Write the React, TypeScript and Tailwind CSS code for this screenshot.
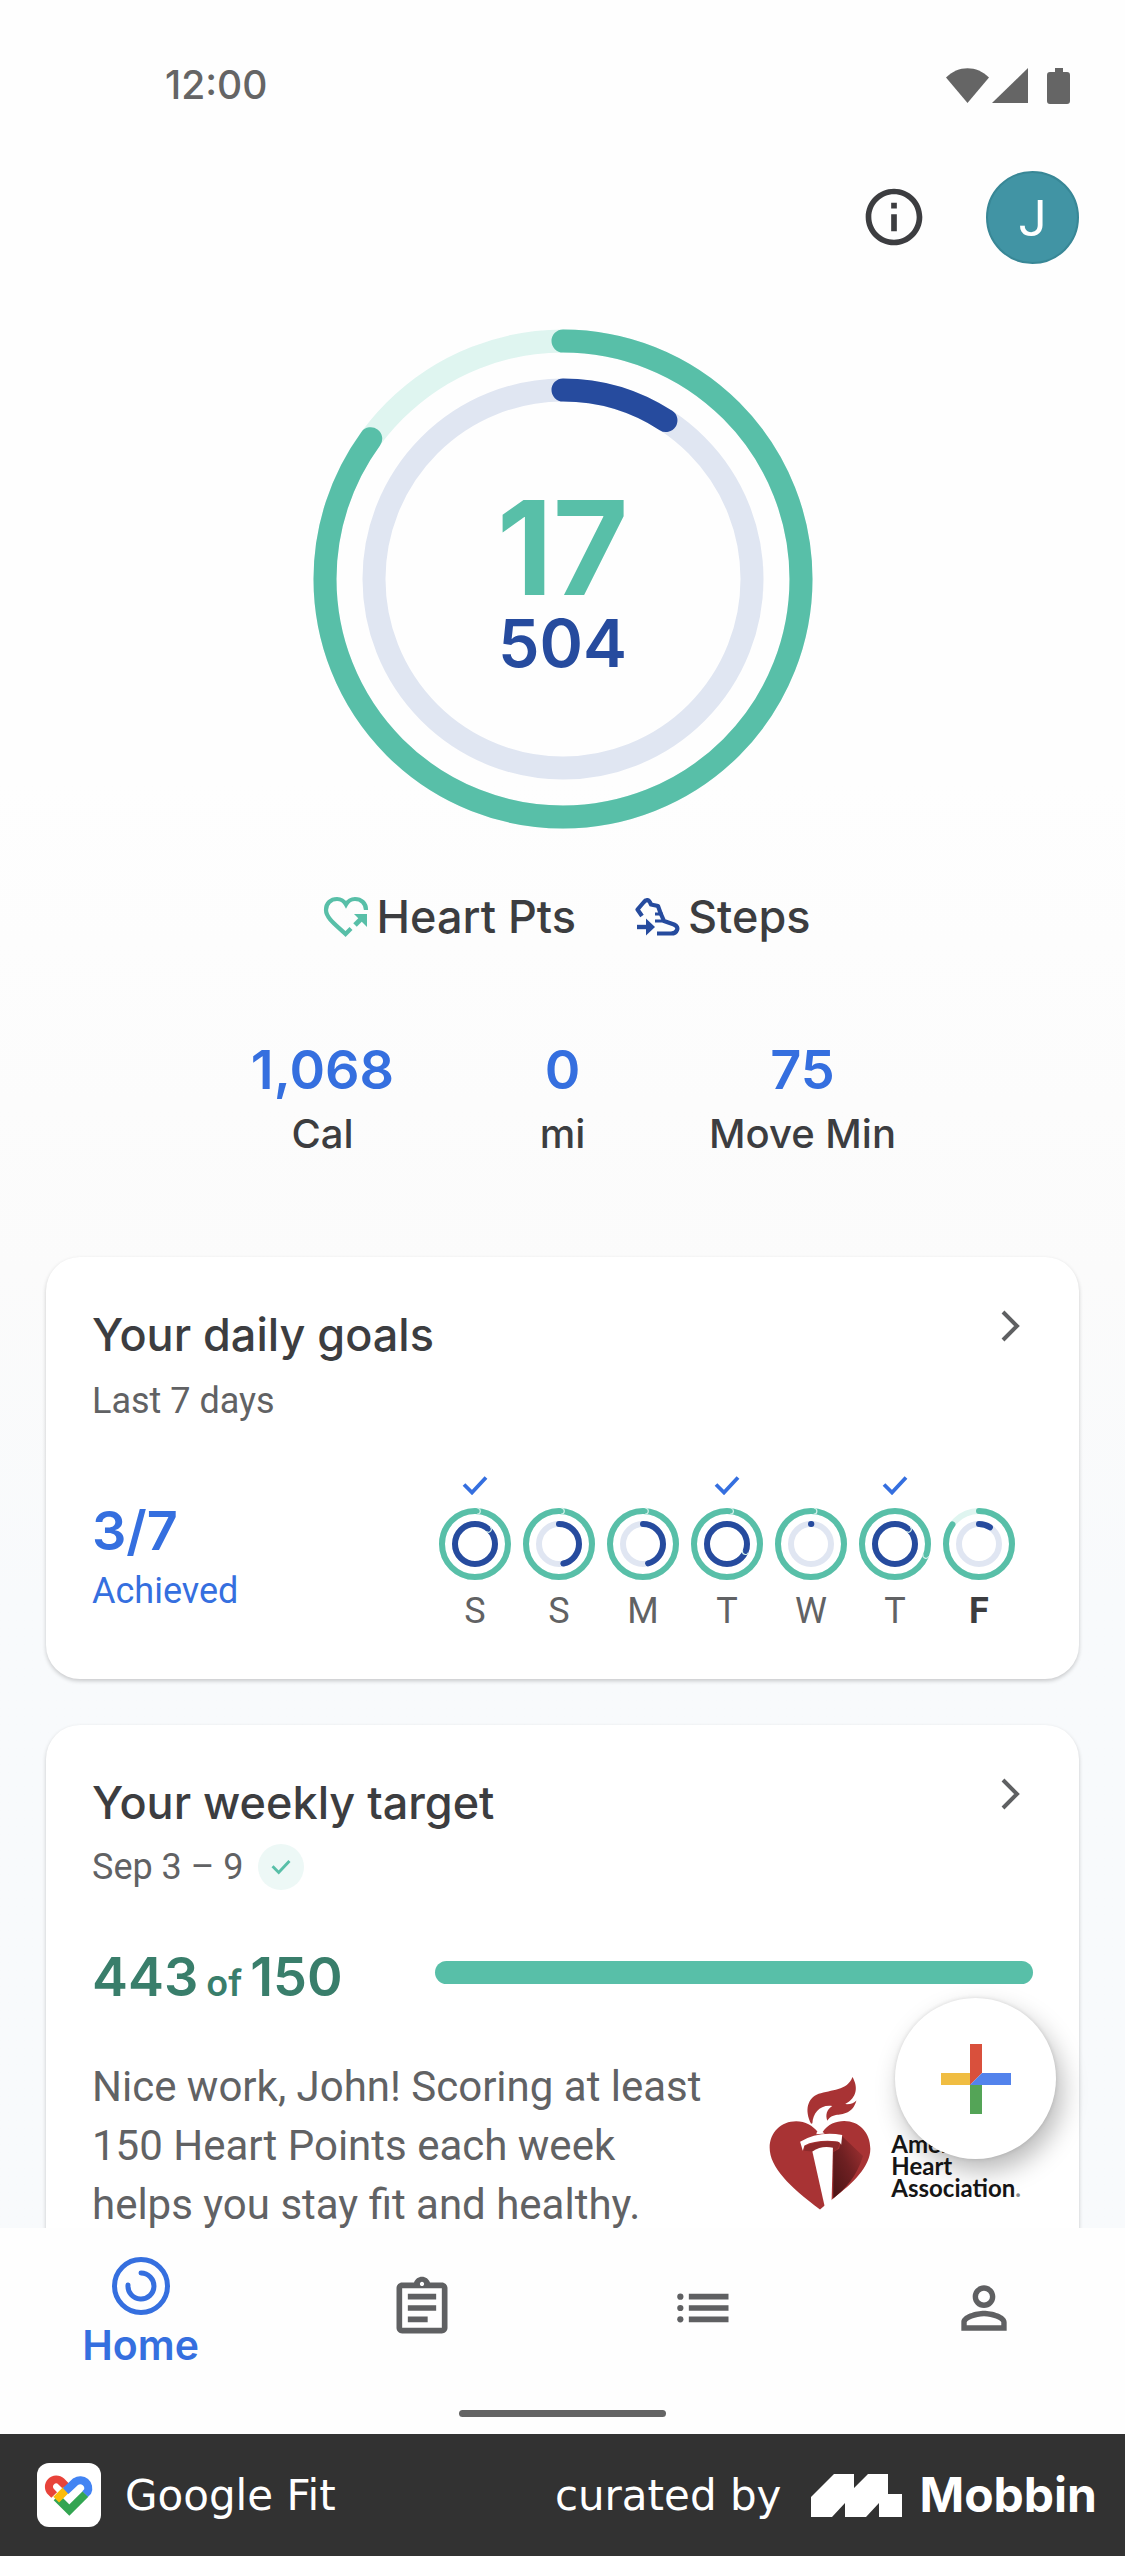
import React from 'react';

interface RingProps {
  size: number;
  outer: number; // degrees of heart points completed
  inner: number; // degrees of steps completed
  outerRadius: number;
  innerRadius: number;
  stroke: number;
  outerLap?: number;
  innerLap?: number;
}

const Arc = ({ radius, degrees, stroke, color }: { radius: number; degrees: number; stroke: number; color: string }) => (
  <circle
    r={radius}
    fill="none"
    stroke={color}
    strokeWidth={stroke}
    strokeLinecap="round"
    strokeDasharray={degrees >= 360 ? undefined : `${(degrees / 180) * Math.PI * radius} 9999`}
    transform="rotate(-90)"
  />
);

const LapMark = ({ radius, angle, stroke }: { radius: number; angle: number; stroke: number }) => (
  <path
    d={`M0 ${-radius - stroke / 2}a${stroke / 2} ${stroke / 2} 0 0 1 0 ${stroke}`}
    transform={`rotate(${angle})`}
    fill="none"
    stroke="#d3f1ea"
    strokeWidth="1.2"
  />
);

const ActivityRing = ({ size, outer, inner, outerRadius, innerRadius, stroke, outerLap, innerLap }: RingProps) => (
  <svg width={size} height={size} viewBox={`${-size / 2} ${-size / 2} ${size} ${size}`} aria-hidden="true">
    <circle r={outerRadius} fill="none" stroke="#dff5f0" strokeWidth={stroke} />
    <circle r={innerRadius} fill="none" stroke="#e0e6f2" strokeWidth={stroke} />
    <Arc radius={outerRadius} degrees={outer} stroke={stroke} color="#58bfa8" />
    <Arc radius={innerRadius} degrees={inner} stroke={stroke} color="#264b9e" />
    {outerLap !== undefined && <LapMark radius={outerRadius} angle={outerLap} stroke={stroke} />}
    {innerLap !== undefined && <LapMark radius={innerRadius} angle={innerLap} stroke={stroke} />}
  </svg>
);

const days = [
  { label: 'S', outer: 360, inner: 360, done: true, outerLap: 4, innerLap: 42 },
  { label: 'S', outer: 360, inner: 166, done: false, outerLap: 4 },
  { label: 'M', outer: 360, inner: 164, done: false, outerLap: 4 },
  { label: 'T', outer: 360, inner: 360, done: true, outerLap: 6, innerLap: 112 },
  { label: 'W', outer: 360, inner: 1, done: false, outerLap: 5 },
  { label: 'T', outer: 360, inner: 360, done: true, outerLap: 110, innerLap: 42 },
  { label: 'F', outer: 306, inner: 33, done: false, today: true },
];

const stats = [
  { value: '1,068', label: 'Cal' },
  { value: '0', label: 'mi' },
  { value: '75', label: 'Move Min' },
];

const HeartPointsIcon = () => (
  <svg width="46" height="42" viewBox="0 0 46 42" fill="none" aria-hidden="true">
    <path d="M43 14C43 7 38 3 32 3C28 3 25 5 23 8.500C21 5 18 3 14 3C8 3 3 7 3 14C3 22 13 29 22.500 38L28 32.500" stroke="#58bfa8" strokeWidth="4.200" />
    <path d="M32 29L40 21" stroke="#58bfa8" strokeWidth="5" />
    <path d="M31 18H44V31Z" fill="#58bfa8" />
  </svg>
);

const StepsIcon = () => (
  <svg width="46" height="40" viewBox="0 0 46 40" fill="none" stroke="#264b9e" strokeWidth="4.200" aria-hidden="true">
    <path d="M8 19L3.500 12.500L9.500 5.500C12 2 15 2 17 7.500L24 9L26.500 16L30 24L40 27.500C43 29 44 31 43 33C42 36 40 36.500 37 36.500H23" strokeLinejoin="round" />
    <path d="M21 17H29M21 24H31" strokeWidth="3.200" />
    <path d="M3 30H14" strokeWidth="4.400" />
    <path d="M12 21.500L21 30L12 38.500Z" fill="#264b9e" stroke="none" />
  </svg>
);

const Check = ({ width, color }: { width: number; color: string }) => (
  <svg width={width} viewBox="0 0 26 20" fill="none" aria-hidden="true">
    <path d="M2 9.500L10 17.500L24 2.500" stroke={color} strokeWidth="3.800" />
  </svg>
);

const Chevron = () => (
  <svg width="44" height="38" viewBox="0 0 44 38" fill="none" aria-hidden="true">
    <path d="M14 5L28 19L14 33" stroke="#5f6062" strokeWidth="4" />
  </svg>
);

const HeartAssociationLogo = () => (
  <svg width="102" height="136" viewBox="88 1080 308 405" role="img" aria-label="Heart and torch">
    <defs>
      <linearGradient id="torchShade" x1="0" y1="1" x2="1" y2="0">
        <stop offset="0" stopColor="#4a1415" />
        <stop offset="0.5" stopColor="#6e2022" />
        <stop offset="1" stopColor="#a83334" />
      </linearGradient>
    </defs>
    <path fill="#a83334" d="M215 1224C195 1185 203 1148 238 1134C275 1121 325 1125 340 1083C357 1112 355 1145 318 1165C335 1166 345 1162 352 1154C340 1196 310 1194 290 1198C275 1201 269 1208 264 1215C258 1198 262 1182 279 1171C242 1166 221 1192 219 1223Z" />
    <path fill="#a83334" d="M242 1483C150 1415 90 1355 90 1297C90 1250 125 1217 170 1217C198 1217 220 1230 236 1250L250 1249C266 1226 290 1216 315 1216C360 1216 394 1250 394 1300C394 1355 340 1405 282 1450L258 1470Z" />
    <path fill="url(#torchShade)" d="M309 1262L372 1322C352 1385 320 1420 282 1450V1310L300 1300Z" />
    <path fill="#fff" d="M182 1279Q235 1246 309 1258L306 1288Q302 1278 290 1277Q230 1272 195 1290L190 1306Z" />
    <path fill="#8e2a2b" d="M196 1292Q240 1273 300 1280Q302 1300 281 1310L280 1297Q248 1290 218 1308L194 1306Z" />
    <path fill="#fff" d="M219 1308Q248 1289 281 1297L277 1460L257 1478Z" />
    <path fill="#fff" d="M233 1248L250 1249L256 1254L231 1256Z" />
  </svg>
);

const FitLogo = () => (
  <svg width="64" height="64" viewBox="50 44 190 190" fill="none" strokeWidth="24" aria-hidden="true">
    <rect x="50" y="44" width="190" height="190" rx="36" fill="#fff" />
    <path d="M101 139L92 130A21 21 0 0 1 122 99L142 119" stroke="#e8433a" />
    <path d="M108 146L146 184L194 136" stroke="#33a552" />
    <path d="M107 153L137 123" stroke="#fbbc0a" />
    <path d="M135 127L165 99A24 24 0 0 1 200 129L193 136" stroke="#4384f3" />
  </svg>
);

const NavIcon = ({ name }: { name: string }) => (
  <svg width="68" height="68" viewBox="0 0 24 24" fill="#5f6062" aria-hidden="true">
    {name === 'Journal' && (
      <path d="M7 15h7v2H7zm0-4h10v2H7zm0-4h10v2H7zM19 3h-4.180C14.400 1.840 13.300 1 12 1s-2.400.840-2.820 2H5c-1.100 0-2 .9-2 2v14c0 1.100.9 2 2 2h14c1.100 0 2-.9 2-2V5c0-1.100-.9-2-2-2zm-7-.250c.410 0 .750.340.750.750s-.340.750-.750.750-.750-.340-.750-.750.340-.750.750-.750zM19 19H5V5h14z" />
    )}
    {name === 'Browse' && (
      <>
        <path d="M7 7h14v2H7zM7 11h14v2H7zM7 15h14v2H7z" />
        <circle cx="4" cy="8" r="1.100" />
        <circle cx="4" cy="12" r="1.100" />
        <circle cx="4" cy="16" r="1.100" />
      </>
    )}
    {name === 'Profile' && (
      <path d="M12 5.900a2.100 2.100 0 1 1 0 4.200 2.100 2.100 0 0 1 0-4.200m0 9c2.970 0 6.100 1.460 6.100 2.100v1.100H5.900V17c0-.640 3.130-2.100 6.100-2.100M12 4C9.790 4 8 5.790 8 8s1.790 4 4 4 4-1.790 4-4-1.790-4-4-4zm0 9c-2.670 0-8 1.340-8 4v3h16v-3c0-2.660-5.330-4-8-4z" />
    )}
  </svg>
);

const CardHeader = ({ title }: { title: string }) => (
  <div className="flex items-start justify-between">
    <h2 className="text-[45px] leading-[56px] font-medium text-[#3c3d40]">{title}</h2>
    <button aria-label={`Open ${title}`}>
      <Chevron />
    </button>
  </div>
);

const App: React.FC = () => {
  return (
    <div className="flex h-screen flex-col bg-[#fefefe] font-['Inter',sans-serif]">
      <div className="relative min-h-0 flex-1">
        <main className="h-full overflow-y-auto bg-linear-to-b from-[#fefefe] from-35% via-[#fbfbfb] via-57% to-[#f8fafc] to-72% [scrollbar-width:none]">
          {/* Status bar */}
          <div className="flex h-[171px] items-center justify-between pr-[53px] pl-[165px]">
            <span className="text-[39px] font-medium text-[#656565]">12:00</span>
            <svg width="126" height="38" viewBox="0 0 126 38" fill="#656565" aria-hidden="true">
              <path d="M0 10.500C12 -2 31 -2 43 10.500L21.500 36Z" />
              <path d="M82 1V36H46Z" />
              <path d="M109 1h8v4h4q3 0 3 3v26q0 3-3 3h-17q-3 0-3-3V8q0-3 3-3h5z" />
            </svg>
          </div>

          {/* Account actions */}
          <header className="flex h-[92px] items-center justify-end gap-[58px] pr-[46px]">
            <button aria-label="Information">
              <svg width="68" height="68" viewBox="0 0 24 24" fill="#3c3d40" aria-hidden="true">
                <path d="M11 7h2v2h-2zm0 4h2v6h-2zm1-9C6.480 2 2 6.480 2 12s4.480 10 10 10 10-4.480 10-10S17.520 2 12 2zm0 18c-4.410 0-8-3.590-8-8s3.590-8 8-8 8 3.590 8 8-3.590 8-8 8z" />
              </svg>
            </button>
            <button className="size-[93px] rounded-full border-2 border-[#388796] bg-[#4194a4] pt-1 font-['Roboto',sans-serif] text-[50px] leading-[56px] text-white">
              J
            </button>
          </header>

          {/* Today's rings */}
          <section className="mt-[66px] flex flex-col items-center">
            <div className="grid place-items-center *:[grid-area:1/1]">
              <ActivityRing size={500} outer={306} inner={33} outerRadius={238} innerRadius={189} stroke={23} />
              <div className="flex flex-col items-center pt-3">
                <span className="text-[130px] leading-[116px] font-bold text-[#58bfa8]">17</span>
                <span className="text-[66px] leading-[74px] font-semibold text-[#264b9e]">504</span>
              </div>
            </div>
            <div className="mt-[60px] flex gap-[58px] pl-2 text-[45px] leading-[56px] font-medium text-[#3c3d40]">
              <div className="flex items-center gap-2">
                <HeartPointsIcon />
                Heart Pts
              </div>
              <div className="flex items-center gap-2">
                <StepsIcon />
                Steps
              </div>
            </div>
          </section>

          <section className="mx-auto mt-[93px] grid w-[720px] max-w-full grid-cols-3">
            {stats.map((stat) => (
              <div key={stat.label} className="flex flex-col items-center gap-2">
                <span className="text-[54px] leading-[64px] font-semibold text-[#356fdf]">{stat.value}</span>
                <span className="text-[40px] leading-[48px] font-medium text-[#3c3d40]">{stat.label}</span>
              </div>
            ))}
          </section>

          <div className="mt-[99px] flex flex-col gap-[46px] px-[46px]">
            {/* Daily goals */}
            <section className="rounded-[34px] bg-white px-[46px] pt-[50px] pb-12 shadow-[0_2px_4px_rgba(0,0,0,0.2)]">
              <CardHeader title="Your daily goals" />
              <p className="mt-[18px] font-['Roboto',sans-serif] text-[36px] leading-[40px] text-[#616264]">Last 7 days</p>
              <div className="mt-12 flex items-end justify-between pr-3">
                <div className="pb-5 text-[#356fdf]">
                  <p className="text-[54px] leading-[64px] font-semibold">3/7</p>
                  <p className="mt-2 font-['Roboto',sans-serif] text-[36px] leading-[40px]">Achieved</p>
                </div>
                <div className="flex">
                  {days.map((day, i) => (
                    <div key={i} className="flex w-[84px] flex-col items-center">
                      <div className="h-[38px] pt-[6px]">{day.done && <Check width={26} color="#356fdf" />}</div>
                      <ActivityRing
                        size={74}
                        outer={day.outer}
                        inner={day.inner}
                        outerRadius={33}
                        innerRadius={20}
                        stroke={6}
                        outerLap={day.outerLap}
                        innerLap={day.innerLap}
                      />
                      <span
                        className={
                          day.today
                            ? "mt-[10px] font-['Roboto',sans-serif] text-[36px] leading-[40px] font-bold text-[#3c3d40]"
                            : "mt-[10px] font-['Roboto',sans-serif] text-[36px] leading-[40px] text-[#616264]"
                        }
                      >
                        {day.label}
                      </span>
                    </div>
                  ))}
                </div>
              </div>
            </section>

            {/* Weekly target */}
            <section className="rounded-[34px] bg-white px-[46px] pt-[50px] pb-12 shadow-[0_2px_4px_rgba(0,0,0,0.2)]">
              <CardHeader title="Your weekly target" />
              <div className="mt-[13px] flex items-center gap-[14px] font-['Roboto',sans-serif] text-[36px] leading-[40px] text-[#616264]">
                Sep 3 – 9
                <span className="grid size-[46px] place-items-center rounded-full bg-[#edf8f6]">
                  <Check width={20} color="#58bfa8" />
                </span>
              </div>
              <div className="mt-[55px] flex items-center justify-between gap-12">
                <p className="text-[54px] leading-[64px] font-semibold whitespace-nowrap text-[#397e6b]">
                  443<span className="mx-2 text-[36px]">of</span>150
                </p>
                <div className="mb-4 h-[23px] w-[598px] rounded-full bg-[#58bfa8]" />
              </div>
              <div className="mt-[42px] flex justify-between">
                <p className="w-[620px] font-['Roboto',sans-serif] text-[42px] leading-[59px] text-[#616264]">
                  Nice work, John! Scoring at least 150 Heart Points each week helps you stay fit and healthy.
                </p>
                <div className="flex items-start gap-5 pt-[18px] pr-3">
                  <HeartAssociationLogo />
                  <p className="pt-[58px] font-['Lato',sans-serif] text-[24px] leading-[22px] font-bold text-[#161616]">
                    American
                    <br />
                    Heart
                    <br />
                    Association<span className="text-[#8a8a8a]">.</span>
                  </p>
                </div>
              </div>
            </section>
          </div>
        </main>

        <button
          aria-label="Add"
          className="absolute right-[69px] bottom-[69px] grid size-[161px] place-items-center rounded-full bg-white shadow-[6px_12px_26px_rgba(0,0,0,0.28),0_0_4px_rgba(0,0,0,0.12)]"
        >
          <svg width="70" height="70" viewBox="0 0 70 70" aria-hidden="true">
            <path d="M0 29H30V41H0Z" fill="#f0bd42" />
            <path d="M29 41H41V70H29Z" fill="#54a457" />
            <path d="M29 0H41V29L29 41Z" fill="#d9503c" />
            <path d="M41 29H70V41H29Z" fill="#5383ec" />
          </svg>
        </button>
      </div>

      <nav className="bg-[#fefefe]">
        <div className="grid h-40 grid-cols-4">
          <a href="#home" className="flex flex-col items-center justify-center gap-2 pt-2 text-[41px] leading-[44px] font-semibold text-[#356fdf]">
            <svg width="58" height="58" viewBox="0 0 58 58" fill="none" stroke="#356fdf" aria-hidden="true">
              <circle cx="29" cy="29" r="26.500" strokeWidth="5" />
              <path d="M29 16A13 13 0 1 1 16 28" strokeWidth="5" strokeLinecap="round" />
            </svg>
            Home
          </a>
          {['Journal', 'Browse', 'Profile'].map((name) => (
            <a key={name} href={`#${name.toLowerCase()}`} aria-label={name} className="grid place-items-center">
              <NavIcon name={name} />
            </a>
          ))}
        </div>
        <div className="flex h-[46px] items-center justify-center pt-1">
          <div className="h-[7px] w-[207px] rounded-full bg-[#646464]" />
        </div>
      </nav>

      <footer className="flex h-[122px] items-center justify-between bg-[#323232] pr-7 pl-[37px] font-['DejaVu_Sans',sans-serif] text-[42px] text-white">
        <div className="flex items-center gap-6">
          <FitLogo />
          Google Fit
        </div>
        <div className="flex items-center gap-[30px]">
          curated by
          <div className="flex items-center gap-4">
            <svg width="92" height="43" viewBox="0 0 92 43" fill="#fff" aria-hidden="true">
              <path d="M23 0H43V14L57 0H77V20H91V43H68V29L55 43H34V29L21 43H0V23Z" />
            </svg>
            <span className="font-['Inter',sans-serif] text-[48px] font-bold">Mobbin</span>
          </div>
        </div>
      </footer>
    </div>
  );
};

export default App;
